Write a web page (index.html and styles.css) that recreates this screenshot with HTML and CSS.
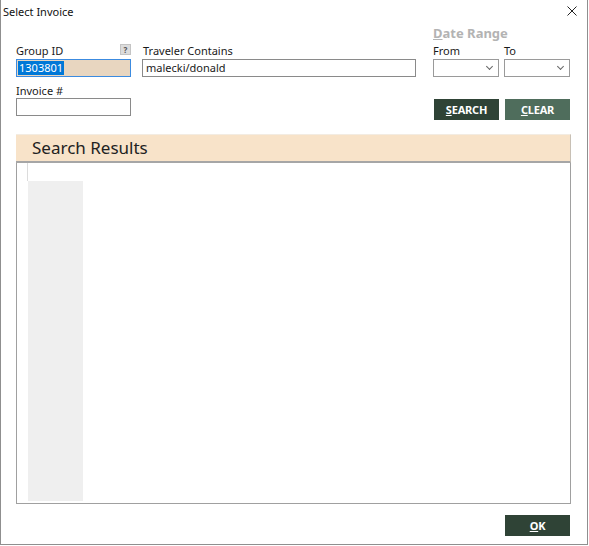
FILE: index.html
```html
<!DOCTYPE html>
<html lang="en">

<head>
    <meta charset="UTF-8">
    <title>Select Invoice</title>
    <link rel="stylesheet" href="styles.css">
</head>

<body>
    <div class="window">
        <div class="titlebar">
            <span class="title">Select Invoice</span>
            <span class="close">
                <svg width="10" height="10" viewBox="0 0 10 10">
                    <path d="M0.5 0.5 L9.5 9.5 M9.5 0.5 L0.5 9.5" stroke="#222" stroke-width="1" fill="none"/>
                </svg>
            </span>
        </div>

        <div class="content">
            <div class="form">
                <div class="range-title"><u>D</u>ate Range</div>

                <div class="label label-group">Group ID <span class="help">?</span></div>
                <div class="label label-traveler">Traveler Contains</div>
                <div class="label label-from">From</div>
                <div class="label label-to">To</div>

                <div class="input input-group"><span class="sel">1303801</span></div>
                <div class="input input-traveler">malecki/donald</div>
                <div class="combo combo-from"><span class="chev"></span></div>
                <div class="combo combo-to"><span class="chev"></span></div>

                <div class="label label-invoice">Invoice #</div>
                <div class="input input-invoice"></div>

                <div class="buttons">
                    <button class="btn btn-dark"><u>S</u>EARCH</button>
                    <button class="btn btn-light"><u>C</u>LEAR</button>
                </div>
            </div>

            <div class="results">
                <div class="results-head">Search Results</div>
                <div class="results-body">
                    <div class="row-header"></div>
                    <div class="row-col"></div>
                </div>
            </div>

            <div class="footer">
                <button class="btn btn-dark btn-ok"><u>O</u>K</button>
            </div>
        </div>
    </div>
</body>

</html>
```

FILE: styles.css
```css
* {
    padding: 0;
    margin: 0;
    box-sizing: border-box;
}

body {
    background: #fff;
    font-family: "Noto Sans", "Open Sans", sans-serif;
    font-size: 11px;
    color: #1a1a1a;
}

.window {
    width: 588px;
    height: 545px;
    border-left: 1px solid #8f8f8f;
    border-right: 1px solid #8f8f8f;
    border-bottom: 1px solid #8f8f8f;
    background: #fff;
}

.titlebar {
    height: 24px;
    display: flex;
    align-items: center;
    justify-content: space-between;
    padding-left: 2px;
    padding-right: 10px;
}

.title {
    font-size: 11px;
    color: #111;
    margin-top: -1px;
}

.close {
    display: flex;
    margin-top: -2px;
}

.content {
    padding: 0 16px 0 15px;
}

/* 表单部分用grid排列 */
.form {
    display: grid;
    grid-template-columns: 115px 11px 274px 17px 66px 5px 66px;
    grid-template-rows: 16px 19px 17px 8px 13px 22px;
}

.range-title {
    grid-column: 5 / 8;
    grid-row: 1;
    font-size: 13px;
    font-weight: bold;
    color: #b3b3b3;
    line-height: 16px;
    margin-top: 1px;
}

.label {
    line-height: 14px;
    align-self: end;
    padding-bottom: 1px;
}

.label-group {
    grid-column: 1;
    grid-row: 2;
    display: flex;
    justify-content: space-between;
    align-items: flex-end;
}

.help {
    width: 11px;
    height: 11px;
    background: #dcdcdc;
    border: 1px solid #c4c4c4;
    font-size: 8px;
    font-weight: bold;
    color: #555;
    line-height: 9px;
    text-align: center;
    margin-bottom: 3px;
}

.label-traveler {
    grid-column: 3;
    grid-row: 2;
    padding-left: 1px;
}

.label-from {
    grid-column: 5;
    grid-row: 2;
}

.label-to {
    grid-column: 7;
    grid-row: 2;
}

.input {
    height: 18px;
    border: 1px solid #8a8a8a;
    line-height: 16px;
    padding-left: 2px;
    font-size: 11px;
    white-space: nowrap;
}

.input-group {
    grid-column: 1;
    grid-row: 3;
    background: #e8d6c0;
    border-color: #3c8be0;
    padding-left: 1px;
}

.sel {
    background: #0078d7;
    color: #fff;
    display: inline-block;
    line-height: 14px;
    padding: 0 1px;
}

.input-traveler {
    grid-column: 3;
    grid-row: 3;
    padding-left: 3px;
}

.combo {
    height: 18px;
    border: 1px solid #9a9a9a;
    position: relative;
}

.combo-from {
    grid-column: 5;
    grid-row: 3;
}

.combo-to {
    grid-column: 7;
    grid-row: 3;
}

.chev {
    position: absolute;
    right: 6px;
    top: 4px;
    width: 5px;
    height: 5px;
    border-right: 1px solid #666;
    border-bottom: 1px solid #666;
    transform: rotate(45deg);
}

.label-invoice {
    grid-column: 1;
    grid-row: 5;
    padding-bottom: 0;
    line-height: 13px;
}

.input-invoice {
    grid-column: 1;
    grid-row: 6;
    margin-top: 1px;
}

.buttons {
    grid-column: 5 / 8;
    grid-row: 6;
    display: flex;
    justify-content: flex-end;
    gap: 6px;
    margin-top: 2px;
}

.btn {
    width: 65px;
    height: 21px;
    border: none;
    color: #fff;
    font-family: "Noto Sans", "Open Sans", sans-serif;
    font-size: 11px;
    font-weight: bold;
    letter-spacing: -0.2px;
}

.btn-dark {
    background: #2f4336;
}

.btn-light {
    background: #4f6d5c;
}

.results {
    margin-top: 15px;
    width: 555px;
}

.results-head {
    height: 29px;
    background: #f8e3c9;
    border-top: 1px solid #f3ece2;
    border-right: 1px solid #c8c0b5;
    border-bottom: 2px solid #a6a6a6;
    font-size: 17px;
    line-height: 26px;
    padding-left: 16px;
    color: #222;
}

.results-body {
    height: 341px;
    border: 1px solid #a0a0a0;
    border-top: none;
    padding-left: 10px;
}

.row-header {
    width: 1px;
    height: 18px;
    background: #dcdcdc;
}

.row-col {
    width: 55px;
    height: 320px;
    margin-left: 1px;
    background: #efefef;
}

.footer {
    display: flex;
    justify-content: flex-end;
    margin-top: 11px;
    padding-right: 1px;
}
```
